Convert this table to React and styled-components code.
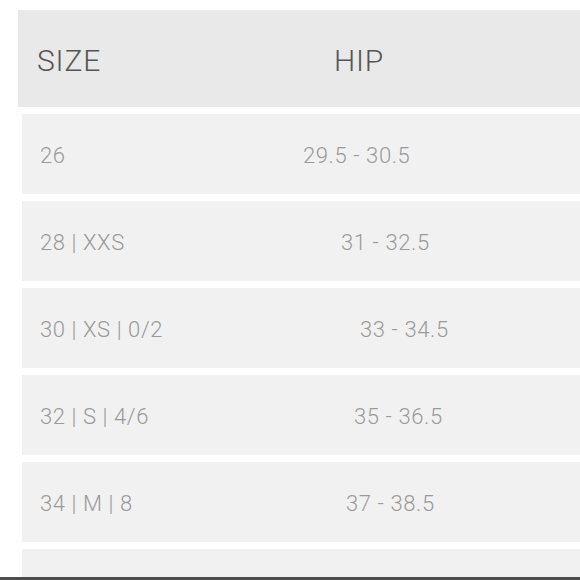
import React from 'react'
import styled, { createGlobalStyle } from 'styled-components'

const GlobalStyle = createGlobalStyle`
  html, body {
    margin: 0;
    padding: 0;
    background: #ffffff;
    font-family: "Helvetica Neue", Roboto, "Liberation Sans", sans-serif;
  }
`

const rows = [
  { size: '26', hip: '29.5 - 30.5', indent: 0 },
  { size: '28 | XXS', hip: '31 - 32.5', indent: 38 },
  { size: '30 | XS | 0/2', hip: '33 - 34.5', indent: 57 },
  { size: '32 | S | 4/6', hip: '35 - 36.5', indent: 51 },
  { size: '34 | M | 8', hip: '37 - 38.5', indent: 43 },
  { size: '', hip: '', indent: 0 },
]

export default function App() {
  return (
    <>
      <GlobalStyle />
      <Page>
        <Chart>
          <Header>
            <HeadCell $width={297}>SIZE</HeadCell>
            <HeadCell>HIP</HeadCell>
          </Header>
          {rows.map((r, i) => (
            <Row key={i}>
              <SizeCell>{r.size}</SizeCell>
              <HipCell $indent={r.indent}>{r.hip}</HipCell>
            </Row>
          ))}
        </Chart>
      </Page>
      <BottomEdge />
    </>
  )
}

const Page = styled.div`
  height: 577px;
  width: 580px;
  overflow: hidden;
`

const Chart = styled.div`
  display: flex;
  flex-direction: column;
  gap: 7px;
  padding-top: 10px;
  padding-left: 18px;
  width: 600px;
`

const Header = styled.div`
  display: flex;
  align-items: center;
  height: 97px;
  background: #e9e9e9;
  padding-left: 19px;
`

const HeadCell = styled.div`
  width: ${(p) => (p.$width ? p.$width + 'px' : 'auto')};
  flex-shrink: 0;
  font-size: 30px;
  font-weight: 300;
  letter-spacing: 0.8px;
  color: #555555;
  padding-top: 3px;
`

const Row = styled.div`
  display: flex;
  align-items: center;
  height: 80px;
  margin-left: 4px;
  background: #f1f1f1;
  padding-left: 18px;
  font-size: 22px;
  font-weight: 300;
  letter-spacing: 0.6px;
  color: #9a9a9a;
`

const SizeCell = styled.div`
  width: 263px;
  flex-shrink: 0;
  padding-top: 2px;
`

const HipCell = styled.div`
  padding-left: ${(p) => p.$indent}px;
  padding-top: 2px;
`

const BottomEdge = styled.div`
  height: 3px;
  width: 580px;
  background: #4d4d4d;
`
